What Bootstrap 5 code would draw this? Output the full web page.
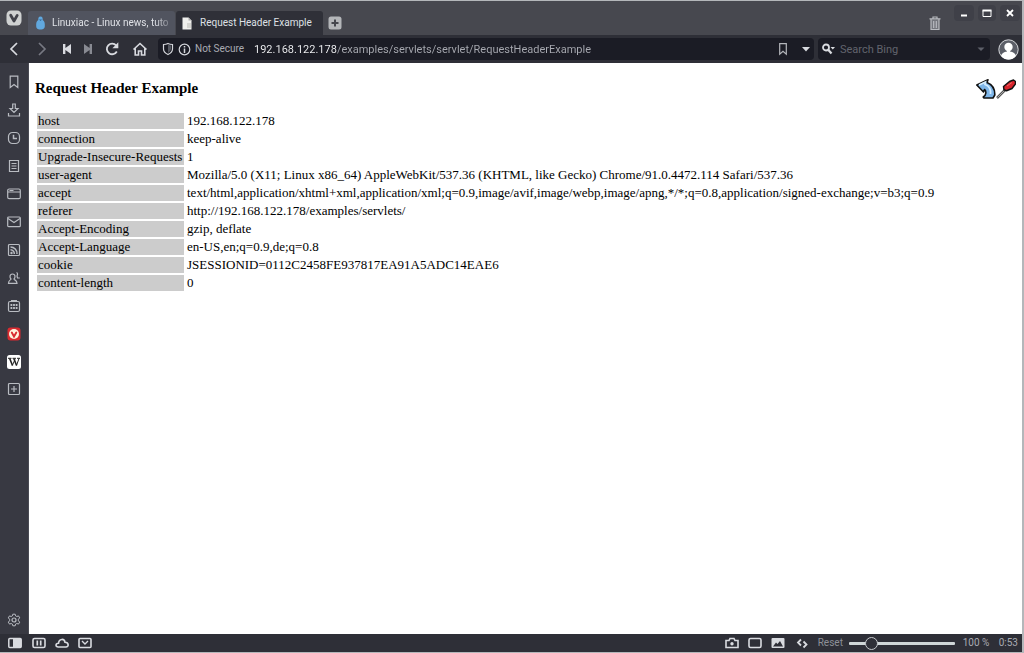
<!DOCTYPE html>
<html lang="en">
<head>
<meta charset="utf-8">
<meta name="viewport" content="width=device-width, initial-scale=1">
<title>Request Header Example</title>
<link href="https://cdn.jsdelivr.net/npm/bootstrap@5.3.0/dist/css/bootstrap.min.css" rel="stylesheet">
<style>
  body { font-family: Roboto, "Noto Sans", sans-serif; font-size: 11px; line-height: 16px; background: #2e2f37; color: #d3d5da; }
  .window { border: solid #b4b7ba; border-width: 1px 2px 1px 0; }
  svg { display: block; flex: none; }
  .ib { display: flex; align-items: center; justify-content: center; border: 0; padding: 0; background: none; color: #d9dbe0; flex: none; }
  .ib:hover { color: #fff; }
  .line { fill: none; stroke: currentColor; stroke-width: 1.2; }
  .tabbar { background: #47484f; height: 34px; }
  .tab { font-size: 10px; width: 147px; height: 24px; padding: 0 4px 0 7px; background: #51545f; color: #dfe1e6; border-radius: 3px 3px 0 0; gap: 6px; border: 0; text-align: left; white-space: nowrap; }
  .tab.current { background: #2f3038; gap: 8px; margin-left: 1px; padding-left: 6px; }
  .tab .fade-end { -webkit-mask-image: linear-gradient(90deg, #000 88%, rgba(0,0,0,.3)); }
  .winbtns { padding-right: 2px; }
  .winbtn { width: 20px; height: 16px; border-radius: 4px; background: #3f4048; color: #fff; }
  .toolbar { height: 28px; padding-right: 3px; }
  .field { height: 22px; background: #1b1c25; border-radius: 4px; }
  .field input { background: none; border: 0; outline: 0; padding: 0; min-width: 0; color: #a9abb2; height: 18px; }
  .field input::placeholder { color: #62646d; opacity: 1; }
  .field .address { color: #b0b2b8; -webkit-text-fill-color: transparent; background: linear-gradient(90deg, #f4f5f7 83px, #a9abb2 83px); -webkit-background-clip: text; background-clip: text; }
  .minor { font-size: 10px; color: #a9abb2; }
  .sidebar { width: 29px; background: #383942; border-right: 1px solid #4a4b54; padding: 5px 0 0; }
  .sidebar .ib { width: 28px; height: 28px; color: #b9bcc2; }
  .page { background: #fff; color: #000; font-family: "Liberation Serif", serif; font-size: 13px; padding: 16px 6px 16px 6px; }
  .page h1 { font-size: 15px; line-height: 18px; font-weight: 700; margin: 0 0 14px; }
  .headers { border-collapse: separate; border-spacing: 2px; line-height: 14px; }
  .headers th, .headers td { padding: 1px; font-weight: 400; }
  .headers th { background: #ccc; width: 147px; }
  .statusbar { height: 18px; padding-left: 7px; }
  .zoomer { appearance: none; width: 106px; height: 14px; background: none; margin: 0; }
  .zoomer::-webkit-slider-runnable-track { height: 3px; background: #d0d7d8; border-radius: 1px; }
  .zoomer::-webkit-slider-thumb { appearance: none; width: 13px; height: 13px; margin-top: -5px; border-radius: 50%; background: #2e2f37; border: 1px solid #c6c9cd; }
</style>
</head>
<body>
<div class="window vh-100 d-flex flex-column">
  <header>
    <div class="tabbar d-flex align-items-end">
      <button class="ib align-self-center ms-1" aria-label="Vivaldi menu" style="width:20px;height:20px">
        <svg width="16" height="16" viewBox="0 0 16 16"><rect x=".5" y=".5" width="15" height="15" rx="4.5" fill="#cfd1d1"/><path d="M4.7 5.2 8 11l3.2-5.6" fill="none" stroke="#41424a" stroke-width="2.8" stroke-linecap="round" stroke-linejoin="round"/></svg>
      </button>
      <button class="tab ms-1 d-flex align-items-center">
        <svg width="11" height="14" viewBox="0 0 11 14"><path d="M5.500 .5C7.500 .5 7.800 2 7.700 4 9.500 5 10 7 9.800 10c0 2-1 3.500-4.300 3.500S1.200 12 1.200 10C1 7 1.500 5 3.300 4 3.200 2 3.500.5 5.500.5Z" fill="#61a8de"/><path d="M4 3.500h3L5.500 5Z" fill="#2f6597"/></svg>
        <span class="fade-end">Linuxiac - Linux news, tuto</span>
      </button>
      <button class="tab current d-flex align-items-center">
        <svg width="10" height="13" viewBox="0 0 10 13"><path d="M.5.500h6l3 3v9h-9Z" fill="#f0f0ed"/><path d="M6.500.500v3h3Z" fill="#aaa"/><path d="M5 6h4v5H5Z" fill="#d5d5d1"/></svg>
        <span>Request Header Example</span>
      </button>
      <button class="ib ms-1 mb-1" aria-label="New tab"><svg width="16" height="16" viewBox="0 0 16 16"><rect x="1.500" y="1.500" width="13" height="13" rx="2.500" fill="#b4b6b9"/><path d="M8 4.500v7M4.500 8h7" stroke="#45464d" stroke-width="2"/></svg></button>
      <button class="ib ms-auto mb-1" aria-label="Closed tabs"><svg width="14" height="16" viewBox="0 0 14 16"><path d="M3 4.500h8V15H3Z" fill="#74767d"/><path d="M1.500 3.800h11M5 3.500V2h4v1.500M3 4v10.500h8V4M5.700 6v7M8.300 6v7" class="line" style="color:#b9bbc0"/></svg></button>
      <div class="winbtns d-flex align-self-start mt-1 ms-2 ps-1">
        <button class="ib winbtn" aria-label="Minimize"><svg width="10" height="10" viewBox="0 0 10 10"><path d="M2 7.500h6" stroke="#fff" stroke-width="2"/></svg></button>
        <button class="ib winbtn mx-1" style="width:18px" aria-label="Maximize"><svg width="10" height="10" viewBox="0 0 10 10"><path d="M1 2.500h8v6H1Z" fill="none" stroke="#fff"/><path d="M.500 2.500h9" stroke="#fff" stroke-width="2"/></svg></button>
        <button class="ib winbtn" aria-label="Close"><svg width="10" height="10" viewBox="0 0 10 10"><path d="m2 2 6 6m0-6L2 8" stroke="#fff" stroke-width="1.800"/></svg></button>
      </div>
    </div>

    <nav class="toolbar d-flex align-items-center">
      <button class="ib" style="width:28px" aria-label="Back"><svg width="14" height="16" viewBox="0 0 14 16"><path d="M10 2 4 8l6 6" class="line" style="stroke-width:1.700"/></svg></button>
      <button class="ib" style="width:28px;color:#777982" aria-label="Forward"><svg width="14" height="16" viewBox="0 0 14 16"><path d="m4 2 6 6-6 6" class="line" style="stroke-width:1.700"/></svg></button>
      <button class="ib" style="width:22px" aria-label="Rewind"><svg width="10" height="12" viewBox="0 0 10 12"><path d="M1 1h2.400v4L9 1v10L3.400 7v4H1Z" fill="currentColor"/></svg></button>
      <button class="ib" style="width:20px;color:#888a92" aria-label="Fast forward"><svg width="10" height="12" viewBox="0 0 10 12"><path d="M9 1H6.600v4L1 1v10l5.600-4v4H9Z" fill="currentColor"/></svg></button>
      <button class="ib" style="width:28px" aria-label="Reload"><svg width="16" height="16" viewBox="0 0 16 16"><path d="M12.800 10.500a5.300 5.300 0 1 1-.6-6" class="line" style="stroke-width:1.800"/><path d="M14.300 1.200v6H8.400Z" fill="currentColor"/></svg></button>
      <button class="ib" style="width:28px" aria-label="Home"><svg width="16" height="16" viewBox="0 0 16 16"><path d="m1.500 8.500 6.500-6 6.500 6M3.200 7.500V14h3.300v-4h3v4h3.300V7.500" class="line" style="stroke-width:1.600"/></svg></button>
      <div class="field d-flex align-items-center flex-fill ms-1 ps-1">
        <svg width="12" height="14" viewBox="0 0 12 14"><path d="M1.500 2.500Q4 2.500 6 1.500q2 1 4.500 1V7q0 3.500-4.500 5.500Q1.500 10.500 1.500 7Z" class="line"/><path d="M6 3v8q3-2 3-4V3.500Z" fill="#555861"/></svg>
        <svg class="ms-1" width="13" height="13" viewBox="0 0 13 13"><circle cx="6.500" cy="6.500" r="5.300" class="line"/><path d="M6.500 5.500V10M6.500 3v1.500" stroke="currentColor" stroke-width="1.500"/></svg>
        <label for="url" class="minor ps-1 text-nowrap" style="width:63px">Not Secure</label>
        <input id="url" class="address flex-fill" value="192.168.122.178/examples/servlets/servlet/RequestHeaderExample" spellcheck="false">
        <button class="ib me-1 pe-1" aria-label="Bookmark this page"><svg width="14" height="14" viewBox="0 0 14 14"><path d="M3.700 1.700h6.600v10.500L7 9.300l-3.300 2.900Z" class="line" style="color:#b4b6bb"/></svg></button>
        <button class="ib" style="width:16px" aria-label="Address history"><svg width="10" height="10" viewBox="0 0 10 10"><path d="M1 3h8L5 7.500Z" fill="currentColor"/></svg></button>
      </div>
      <div class="field d-flex align-items-center ms-1 me-1 pe-1" style="width:172px">
        <button class="ib ms-1" aria-label="Choose search engine"><svg width="14" height="12" viewBox="0 0 14 12"><circle cx="4" cy="4.500" r="3" class="line" style="stroke-width:1.800"/><path d="m6 6.500 3.500 4" stroke="currentColor" stroke-width="2.200"/><path d="M8.500 4h4.500l-2.200 2.500Z" fill="currentColor"/></svg></button>
        <input class="flex-fill ms-1" placeholder="Search Bing" aria-label="Search Bing">
        <button class="ib" aria-label="Search history"><svg width="10" height="10" viewBox="0 0 10 10"><path d="M1.500 3.500h7L5 7Z" fill="#5e606a"/></svg></button>
      </div>
      <button class="ib ms-1" aria-label="Profile"><svg width="21" height="21" viewBox="0 0 21 21"><circle cx="10.500" cy="10.500" r="9.700" fill="#5c5f68" stroke="#d5d7da"/><circle cx="10.500" cy="8" r="4.200" fill="#fff"/><path d="M3 17q1-4 6-4.500v-2h3v2q5 .5 6 4.500-3 3.500-7.500 3.500T3 17Z" fill="#fff"/></svg></button>
    </nav>
  </header>

  <div class="d-flex flex-fill" style="min-height:0">
    <aside class="sidebar d-flex flex-column flex-shrink-0">
      <button class="ib" aria-label="Bookmarks"><svg width="14" height="14" viewBox="0 0 14 14"><path d="M3.200 1.200h7.600v11.300L7 9.500l-3.800 3Z" class="line"/></svg></button>
      <button class="ib" aria-label="Downloads"><svg width="14" height="16" viewBox="0 0 14 16"><path d="M5.700 2h2.600v4.500H11L7 10.500 3 6.500h2.700ZM1.500 11v3h11v-3" class="line"/></svg></button>
      <button class="ib" aria-label="History"><svg width="14" height="14" viewBox="0 0 14 14"><rect x="1.500" y="1.500" width="11" height="11" rx="4" class="line"/><path d="M6.500 3.800v3.700H10" class="line" style="stroke-width:1.500"/></svg></button>
      <button class="ib" aria-label="Notes"><svg width="14" height="14" viewBox="0 0 14 14"><path d="M2.500 1.500h9v11h-9ZM4.500 4.500h5M4.500 7h5M4.500 9.500h5" class="line"/></svg></button>
      <button class="ib" aria-label="Windows"><svg width="14" height="14" viewBox="0 0 14 14"><rect x=".7" y="2" width="12.600" height="9.700" rx="1.500" class="line"/><path d="M1 5h12M2.500 3.500h4" class="line"/></svg></button>
      <button class="ib" aria-label="Mail"><svg width="14" height="14" viewBox="0 0 14 14"><rect x=".7" y="2" width="12.600" height="9.700" rx="1" class="line"/><path d="m1 3.500 6 4 6-4" class="line"/></svg></button>
      <button class="ib" aria-label="Feeds"><svg width="14" height="14" viewBox="0 0 14 14"><rect x="1.500" y="1.500" width="11" height="11" rx="1" class="line"/><path d="M3.500 4a6.500 6.500 0 0 1 6.500 7M3.500 6.800A4 4 0 0 1 7.300 11" class="line" style="stroke-width:1.500"/><circle cx="4.500" cy="10" r="1.200" fill="currentColor"/></svg></button>
      <button class="ib" aria-label="Contacts"><svg width="14" height="14" viewBox="0 0 14 14"><path d="M5.500 3c3.300 0 2.800 3.800 1.500 5 0 1 3 1 3 4.300H1.500c0-3.300 2.500-3.300 2.500-4.300C2.700 6.800 2.200 3 5.500 3Z" class="line"/><path d="M9.500 1.500c1.500.5 1 2.500.5 3.500l.5 2h2.300" class="line"/></svg></button>
      <button class="ib" aria-label="Calendar"><svg width="14" height="14" viewBox="0 0 14 14"><rect x="1.500" y="2.500" width="11" height="10" rx="1.500" class="line"/><path d="M4 1.500h6" stroke="currentColor"/><path d="M3.500 6h7M3.500 9h7" stroke="currentColor" stroke-width="1.800" stroke-dasharray="1.800 .8"/></svg></button>
      <button class="ib" aria-label="Vivaldi panel"><svg width="14" height="14" viewBox="0 0 14 14"><rect x=".5" y=".5" width="13" height="13" rx="3" fill="#d92b30"/><circle cx="7" cy="7" r="5" fill="#fff4df"/><path d="m4.800 5.500 2.200 4 2.300-4" fill="none" stroke="#d92b30" stroke-width="1.900" stroke-linecap="round"/></svg></button>
      <button class="ib" aria-label="Wikipedia panel"><svg width="14" height="14" viewBox="0 0 14 14"><rect width="14" height="14" rx="2.500" fill="#fff"/><path d="M1 3.300h3.500M5.500 3.300H9M10 3.300h3M8 4.500 5.300 10.500M12 3.500 9.500 10.500" fill="none" stroke="#222"/><path d="m2.700 3.500 2.800 7M6.800 3.500l2.800 7" stroke="#222" stroke-width="1.600"/></svg></button>
      <button class="ib" style="height:26px" aria-label="Add web panel"><svg width="14" height="14" viewBox="0 0 14 14"><rect x="1.500" y="1.500" width="11" height="11" rx="1" class="line"/><path d="M7 4v6M4 7h6" class="line"/></svg></button>
      <button class="ib mt-auto" aria-label="Settings"><svg width="14" height="14" viewBox="0 0 14 14"><path d="m5.800 1.200h2.400l.4 1.700 1.200.6 1.700-.6 1.200 2-1.300 1.300v1.600l1.300 1.300-1.200 2-1.700-.6-1.200.6-.4 1.700H5.800l-.4-1.700-1.200-.6-1.700.6-1.200-2 1.300-1.300V6.200L1.300 4.900l1.200-2 1.700.6 1.200-.6Z" class="line" style="stroke-width:1"/><circle cx="7" cy="7" r="2" class="line"/></svg></button>
    </aside>

    <main class="page flex-fill overflow-auto">
      <div class="d-flex justify-content-between align-items-start">
        <h1>Request Header Example</h1>
        <div class="d-flex">
          <a href="#source" aria-label="View source"><svg width="20" height="20" viewBox="0 0 20 20"><path d="M.8 6 12 .8 11 3.500c5 2 8 6.500 7.800 12.500l-1.800 3H8l-.8-1C10.500 16 10.500 12 8.500 10.500L7.500 13Z" fill="#7db5e8" stroke="#111" stroke-width="1.600" stroke-linejoin="round"/><path d="m3 6 6.500-3-.5 2.500C13 7 15 10.500 14.500 15" fill="none" stroke="#d4ecff" stroke-width="1.700"/></svg></a>
          <a href="#run" aria-label="Execute"><svg width="20" height="20" viewBox="0 0 20 20"><path d="m1 19 9-9" stroke="#555" stroke-width="2.500"/><path d="m1.500 18.500 9-9" stroke="#bbb" stroke-width=".8"/><path d="m7.500 7.500 6-5L17.500 1l2 1.500v2.500L16 9.500l-5.500 2.300-2.500-1Z" fill="#d8242c" stroke="#111" stroke-width="1.500" stroke-linejoin="round"/><path d="m11 7 5-3.500" stroke="#ee6a6a"/></svg></a>
        </div>
      </div>
      <table class="headers">
        <tr><th scope="row">host</th><td>192.168.122.178</td></tr>
        <tr><th scope="row">connection</th><td>keep-alive</td></tr>
        <tr><th scope="row">Upgrade-Insecure-Requests</th><td>1</td></tr>
        <tr><th scope="row">user-agent</th><td>Mozilla/5.0 (X11; Linux x86_64) AppleWebKit/537.36 (KHTML, like Gecko) Chrome/91.0.4472.114 Safari/537.36</td></tr>
        <tr><th scope="row">accept</th><td>text/html,application/xhtml+xml,application/xml;q=0.9,image/avif,image/webp,image/apng,*/*;q=0.8,application/signed-exchange;v=b3;q=0.9</td></tr>
        <tr><th scope="row">referer</th><td>http://192.168.122.178/examples/servlets/</td></tr>
        <tr><th scope="row">Accept-Encoding</th><td>gzip, deflate</td></tr>
        <tr><th scope="row">Accept-Language</th><td>en-US,en;q=0.9,de;q=0.8</td></tr>
        <tr><th scope="row">cookie</th><td>JSESSIONID=0112C2458FE937817EA91A5ADC14EAE6</td></tr>
        <tr><th scope="row">content-length</th><td>0</td></tr>
      </table>
    </main>
  </div>

  <footer class="statusbar d-flex align-items-center justify-content-between pe-1">
    <div class="d-flex" style="gap:9px">
      <button class="ib" style="width:16px" aria-label="Toggle panel"><svg width="14" height="12" viewBox="0 0 14 12"><rect x=".8" y="1.500" width="12.400" height="9" rx="1" class="line" style="stroke-width:1.500"/><path d="M5 2h8v8H5Z" fill="currentColor"/></svg></button>
      <button class="ib" style="width:14px" aria-label="Break mode"><svg width="14" height="12" viewBox="0 0 14 12"><rect x="1" y="1.500" width="12" height="9" rx="1.500" class="line" style="stroke-width:1.600"/><path d="M5.300 3.500v5M8.700 3.500v5" stroke="currentColor" stroke-width="1.700"/></svg></button>
      <button class="ib" style="width:14px" aria-label="Sync"><svg width="14" height="12" viewBox="0 0 14 12"><path d="M3.200 10C.3 10 .2 6.300 3.500 6.300 4 1.300 9.500 1.300 10 5.300c4 0 4 4.700 1 4.700Z" class="line" style="stroke-width:1.600"/></svg></button>
      <button class="ib" style="width:14px" aria-label="Mail status"><svg width="14" height="12" viewBox="0 0 14 12"><rect x="1" y="1.500" width="12" height="9" rx="1" class="line" style="stroke-width:1.600"/><path d="m4 4 3 3 3-3" class="line" style="stroke-width:1.400"/></svg></button>
    </div>
    <div class="minor d-flex align-items-center">
      <div class="d-flex me-2" style="gap:9px">
        <button class="ib" style="width:14px" aria-label="Capture page"><svg width="14" height="12" viewBox="0 0 14 12"><path d="M1 3.500h3l1-2h4l1 2h3v7H1Z" class="line" style="stroke-width:1.600"/><circle cx="7" cy="6.800" r="1.700" fill="currentColor"/></svg></button>
        <button class="ib" style="width:14px" aria-label="Tile tabs"><svg width="14" height="12" viewBox="0 0 14 12"><rect x="1" y="1.500" width="12" height="9" rx="1.500" class="line" style="stroke-width:1.600"/></svg></button>
        <button class="ib" style="width:14px" aria-label="Toggle images"><svg width="14" height="12" viewBox="0 0 14 12"><rect x=".5" y="1" width="13" height="10" rx="1" fill="currentColor"/><path d="m2 9.500 3-4 1.500 1.500L9 4l3 5.500Z" fill="#2e2f37"/></svg></button>
        <button class="ib" style="width:16px" aria-label="Page actions"><svg width="14" height="12" viewBox="0 0 14 12"><path d="M6 2.500 3 5.500l3 3M8.500 4.500l3 3-3 3" class="line" style="stroke-width:1.800"/></svg></button>
      </div>
      <button class="ib" style="color:#8d8f97;width:31px;justify-content:start">Reset</button>
      <input class="zoomer" type="range" min="0" max="100" value="17" aria-label="Page zoom">
      <span class="ms-2 text-nowrap" style="width:36px">100 %</span>
      <span>0:53</span>
    </div>
  </footer>
</div>
<script src="https://cdn.jsdelivr.net/npm/bootstrap@5.3.0/dist/js/bootstrap.bundle.min.js"></script>
</body>
</html>
